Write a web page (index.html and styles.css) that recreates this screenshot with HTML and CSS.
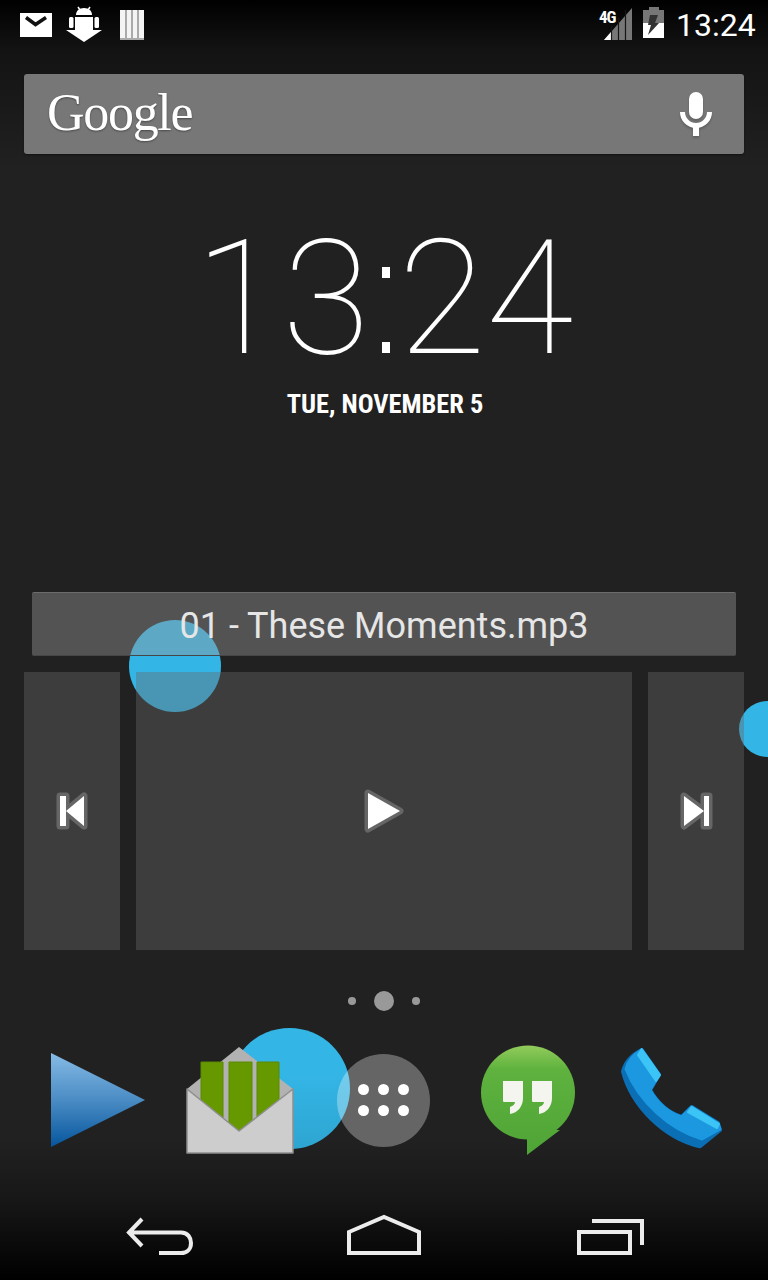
FILE: index.html
```html
<!DOCTYPE html>
<html lang="en">
<head>
    <meta charset="UTF-8">
    <meta name="viewport" content="width=device-width, initial-scale=1.0">
    <title>Home screen</title>
    <link rel="stylesheet" href="styles.css">
</head>
<body>
<div class="screen">
    <div class="touch touch-title"></div>
    <div class="touch touch-next"></div>
    <div class="touch touch-dock"></div>

    <div class="status">
        <svg class="status-icon" viewBox="0 0 48 50">
            <rect x="8" y="13" width="32" height="24" fill="#fff"/>
            <path d="M14 17.5 L23.5 24.5 L34 17.5" fill="none" stroke="#111" stroke-width="3.5"/>
        </svg>
        <svg class="status-icon" viewBox="0 0 48 50">
            <path d="M16 15 C16 11 19 8 24 8 C29 8 32 11 32 15 Z" fill="#fff"/>
            <path d="M18 7 L20 10 M30 7 L28 10" stroke="#fff" stroke-width="1.5"/>
            <rect x="9" y="17" width="4.5" height="11" rx="1.5" fill="#fff"/>
            <rect x="34.5" y="17" width="4.5" height="11" rx="1.5" fill="#fff"/>
            <path d="M15 17 H33 V30 H42 L24 42 L6 30 H15 Z" fill="#fff"/>
        </svg>
        <svg class="status-icon" viewBox="0 0 48 50">
            <rect x="12" y="10" width="24" height="30" fill="#f4f4f4"/>
            <path d="M18 10 V40 M24 10 V40 M30 10 V40" stroke="#8a8a8a" stroke-width="1.4"/>
            <rect x="12" y="38" width="24" height="2" fill="#aaa"/>
        </svg>
        <div class="status-fill"></div>
        <div class="signal">
            <span class="signal-label">4G</span>
            <svg class="status-icon" viewBox="0 0 48 50">
                <path d="M10 40 L38 8 V40 Z" fill="#777"/>
                <path d="M10 40 L17 32 V40 Z" fill="#fff"/>
                <path d="M17.5 26 V40 M24.5 18 V40 M31.5 10 V40" stroke="#161616" stroke-width="1.2"/>
            </svg>
        </div>
        <svg class="status-icon" viewBox="0 0 48 50">
            <path d="M19 7 H29 V10 H34 V23 H13 V10 H19 Z" fill="#777"/>
            <rect x="13" y="23" width="21" height="15" fill="#fff"/>
            <path d="M20 15 H28 L25 23 H29 L18 35 L21 25 H18 Z" fill="#333"/>
        </svg>
        <span class="status-time">13:24</span>
    </div>

    <div class="search">
        <span class="search-logo">Google</span>
        <svg class="search-mic" viewBox="0 0 40 50">
            <rect x="13" y="2" width="14" height="27" rx="7" fill="#fff"/>
            <path d="M6.5 22 A13.5 13.5 0 0 0 33.5 22" fill="none" stroke="#fff" stroke-width="5"/>
            <rect x="17" y="36" width="6" height="10" fill="#fff"/>
        </svg>
    </div>

    <div class="clock">13<span class="clock-colon">:</span>24</div>
    <div class="date">TUE, NOVEMBER 5</div>

    <div class="music">
        <div class="track">01 - These Moments.mp3</div>
        <div class="controls">
            <div class="control control-side">
                <svg class="control-icon" viewBox="0 0 36 40">
                    <path d="M6 5 H12 V20 L30 5 V35 L12 20 V35 H6 Z"/>
                </svg>
            </div>
            <div class="control control-main">
                <svg class="control-icon control-play" viewBox="0 0 44 48">
                    <path d="M6 6 L38 24 L6 42 Z"/>
                </svg>
            </div>
            <div class="control control-side">
                <svg class="control-icon" viewBox="0 0 36 40">
                    <path d="M6 5 L26 20 V5 H31 V35 H26 V20 L6 35 Z"/>
                </svg>
            </div>
        </div>
    </div>

    <div class="pages">
        <span class="page-dot"></span>
        <span class="page-dot page-dot-active"></span>
        <span class="page-dot"></span>
    </div>

    <div class="dock">
        <div class="dock-cell">
            <svg class="dock-icon" viewBox="0 0 120 120">
                <defs>
                    <linearGradient id="playBlue" x1="0" y1="0" x2="0" y2="1">
                        <stop offset="0" stop-color="#86bbe6"/>
                        <stop offset="0.5" stop-color="#4a8cc4"/>
                        <stop offset="1" stop-color="#06569e"/>
                    </linearGradient>
                </defs>
                <path d="M15 13 L109 60 L15 107 Z" fill="url(#playBlue)"/>
            </svg>
        </div>
        <div class="dock-cell">
            <svg class="dock-icon" viewBox="0 0 120 120">
                <path d="M7 49 L59 7 L113 49 L59 91 Z" fill="#b2b2b2"/>
                <path d="M21 22 H43 V78 L21 60 Z M49 22 H72 V81 L59 91 L49 83 Z M77 22 H99 V60 L77 77 Z" fill="#669900" stroke="#5a8a00" stroke-width="1"/>
                <path d="M7 49 L59 91 L113 49 V113 H7 Z" fill="#cdcdcd" stroke="#8f8f8f" stroke-width="1.5" stroke-linejoin="round"/>
            </svg>
        </div>
        <div class="dock-cell">
            <div class="launcher">
                <span class="launcher-dot"></span>
                <span class="launcher-dot"></span>
                <span class="launcher-dot"></span>
                <span class="launcher-dot"></span>
                <span class="launcher-dot"></span>
                <span class="launcher-dot"></span>
            </div>
        </div>
        <div class="dock-cell">
            <svg class="dock-icon" viewBox="0 0 120 120">
                <defs>
                    <linearGradient id="hangGreen" gradientUnits="userSpaceOnUse" x1="0" y1="5" x2="0" y2="114">
                        <stop offset="0" stop-color="#93cc5c"/>
                        <stop offset="0.22" stop-color="#5fb23e"/>
                        <stop offset="1" stop-color="#4ea436"/>
                    </linearGradient>
                </defs>
                <circle cx="60" cy="52.5" r="47" fill="url(#hangGreen)"/>
                <path d="M59 90 V115 L92 90 Z" fill="url(#hangGreen)"/>
                <path d="M35 41 H55 V58 C55 66 50 73 42 74 V67 C45 66 47 64 47 62 H36 C35 62 35 61 35 60 Z" fill="#f5f5f0"/>
                <path d="M64 41 H84 V58 C84 66 79 73 71 74 V67 C74 66 76 64 76 62 H65 C64 62 64 61 64 60 Z" fill="#f5f5f0"/>
            </svg>
        </div>
        <div class="dock-cell">
            <svg class="dock-icon" viewBox="0 0 120 120">
                <path d="M29.7 10 L47 34.7 L38 50 C46 64 57 73 69.7 77 L79.7 67 L106 83.3 L108 90 L88 106.3 C52 98 20 66 11 31.7 Q14 18 29.7 10 Z" fill="#0b6fb5" stroke="#0b6fb5" stroke-width="4" stroke-linejoin="round"/>
                <path d="M29.7 10 L47 34.7 L38 50 C46 64 57 73 69.7 77 L79.7 67 L106 83.3 L108 89 L90 99 C58 90 27 62 14 29 Q17 17 29.7 10 Z" fill="#1b98e0" stroke="#1b98e0" stroke-width="3" stroke-linejoin="round"/>
                <path d="M29.7 9 L48 35 L44 41 L26 15 Z M79.7 67 L107 84 L105 88 L76 72 Z" fill="#3cc4f6" stroke="#3cc4f6" stroke-width="2" stroke-linejoin="round"/>
            </svg>
        </div>
    </div>

    <div class="nav">
        <svg class="nav-icon" viewBox="0 0 144 60">
            <path d="M54 8 L41 21.5 L54 35 M41 21.5 H93 C100 21.5 103 27 103 32 C103 38 99 42 93 42 H71" fill="none" stroke="#ececec" stroke-width="4"/>
        </svg>
        <svg class="nav-icon" viewBox="0 0 144 60">
            <path d="M37 21 L72 6 L107 21 V42 H37 Z" fill="none" stroke="#ececec" stroke-width="4"/>
        </svg>
        <svg class="nav-icon" viewBox="0 0 144 60">
            <rect x="43" y="21" width="51" height="21" fill="none" stroke="#ececec" stroke-width="4"/>
            <path d="M56 10 H106 V34" fill="none" stroke="#ececec" stroke-width="4"/>
        </svg>
    </div>
</div>
</body>
</html>
```

FILE: styles.css
```css
body {
    margin: 0;
    padding: 0;
    background: #212121;
    font-family: 'Roboto', sans-serif;
}
.screen {
    position: relative;
    z-index: 0;
    width: 768px;
    height: 1280px;
    overflow: hidden;
    background: linear-gradient(#000 0, #131313 50px, #212121 170px, #212121 1140px, #171717 1200px, #000 1280px);
}

/* touch trails, they sit behind the widgets */
.touch {
    position: absolute;
    z-index: -1;
    border-radius: 50%;
    background: #33b5e5;
}
.touch-title {
    left: 129px;
    top: 620px;
    width: 92px;
    height: 92px;
}
.touch-next {
    left: 739px;
    top: 701px;
    width: 56px;
    height: 56px;
}
.touch-dock {
    left: 229px;
    top: 1028px;
    width: 121px;
    height: 121px;
    background: linear-gradient(#33b5e5 40%, #2ea5d1);
}

.status {
    display: flex;
    align-items: center;
    height: 50px;
    padding: 0 14px 0 12px;
}
.status-icon {
    display: block;
    flex: none;
    width: 48px;
    height: 50px;
}
.status-fill {
    flex: 1;
}
.signal {
    position: relative;
    margin-right: -12px;
}
.signal-label {
    position: absolute;
    left: 5px;
    top: 8px;
    color: #fff;
    font-size: 17px;
    font-weight: 700;
    font-stretch: 75%;
    line-height: 18px;
    letter-spacing: -1px;
}
.status-time {
    margin-left: -2px;
    color: #fff;
    font-size: 32px;
    font-weight: 400;
    line-height: 50px;
    width: 78px;
    white-space: nowrap;
}

.search {
    display: flex;
    align-items: center;
    justify-content: space-between;
    height: 80px;
    margin: 24px 24px 0;
    padding: 0 28px 0 23px;
    background: #777;
    border-radius: 3px;
    box-shadow: 0 1px 2px rgba(0, 0, 0, 0.4);
}
.search-logo {
    margin-bottom: 3px;
    color: #fff;
    font-family: 'Liberation Serif', serif;
    font-size: 52px;
    letter-spacing: -1.3px;
    line-height: 72px;
    text-shadow: 0 1px 2px rgba(0, 0, 0, 0.4);
}
.search-mic {
    width: 40px;
    height: 50px;
    margin-top: 2px;
    filter: drop-shadow(0 2px 1px rgba(0, 0, 0, 0.2));
}

.clock {
    margin-top: 60px;
    height: 170px;
    color: #fff;
    font-size: 160px;
    font-weight: 100;
    line-height: 170px;
    text-align: center;
}

/* the colon keeps its place in the text, its dots are square */
.clock-colon {
    position: relative;
    color: transparent;
}
.clock-colon::before,
.clock-colon::after {
    content: "";
    position: absolute;
    left: 50%;
    width: 8px;
    height: 11px;
    margin-left: -2px;
    background: #fff;
}
.clock-colon::before {
    top: 62px;
}
.clock-colon::after {
    top: 137px;
}

.date {
    margin-top: 2px;
    padding-left: 2px;
    height: 36px;
    color: #fff;
    font-size: 26.4px;
    font-weight: 700;
    font-stretch: 75%;
    line-height: 36px;
    text-align: center;
}

.music {
    margin: 170px 24px 0;
}
.track {
    box-sizing: border-box;
    height: 64px;
    margin: 0 8px;
    background: rgba(152, 152, 152, 0.42);
    border-top: 1px solid #6c6c6c;
    border-bottom: 1px solid #464646;
    border-radius: 2px;
    color: #e6e6e6;
    font-size: 36px;
    font-weight: 400;
    line-height: 66px;
    text-align: center;
}
.controls {
    display: flex;
    gap: 16px;
    height: 278px;
    margin-top: 16px;
}
.control {
    display: flex;
    align-items: center;
    justify-content: center;
    background: rgba(105, 105, 105, 0.4);
}
.control-side {
    flex: none;
    width: 96px;
}
.control-main {
    flex: 1;
}
.control-icon {
    width: 36px;
    height: 40px;
    fill: #fff;
    stroke: #666;
    stroke-width: 7;
    stroke-linejoin: round;
    paint-order: stroke;
}
.control-play {
    width: 44px;
    height: 48px;
}

.pages {
    display: flex;
    align-items: center;
    justify-content: center;
    gap: 18px;
    height: 20px;
    margin-top: 41px;
}
.page-dot {
    width: 8px;
    height: 8px;
    border-radius: 50%;
    background: #999;
}
.page-dot-active {
    width: 20px;
    height: 20px;
}

.dock {
    display: grid;
    grid-template-columns: repeat(5, 144px);
    height: 120px;
    margin: 29px 24px 0;
}
.dock-cell {
    display: flex;
    align-items: center;
    justify-content: center;
}
.dock-icon {
    width: 120px;
    height: 120px;
}
.launcher {
    display: grid;
    grid-template-columns: repeat(3, 11px);
    grid-auto-rows: 11px;
    gap: 10px 9px;
    align-content: center;
    justify-content: center;
    width: 93px;
    height: 93px;
    margin-right: 1px;
    border-radius: 50%;
    background: rgba(255, 255, 255, 0.31);
}
.launcher-dot {
    border-radius: 50%;
    background: #fff;
}

.nav {
    display: grid;
    grid-template-columns: repeat(3, 224px);
    justify-items: center;
    justify-content: center;
    margin: 51px 0 0;
    height: 60px;
}
.nav-icon {
    width: 144px;
    height: 60px;
}
```
